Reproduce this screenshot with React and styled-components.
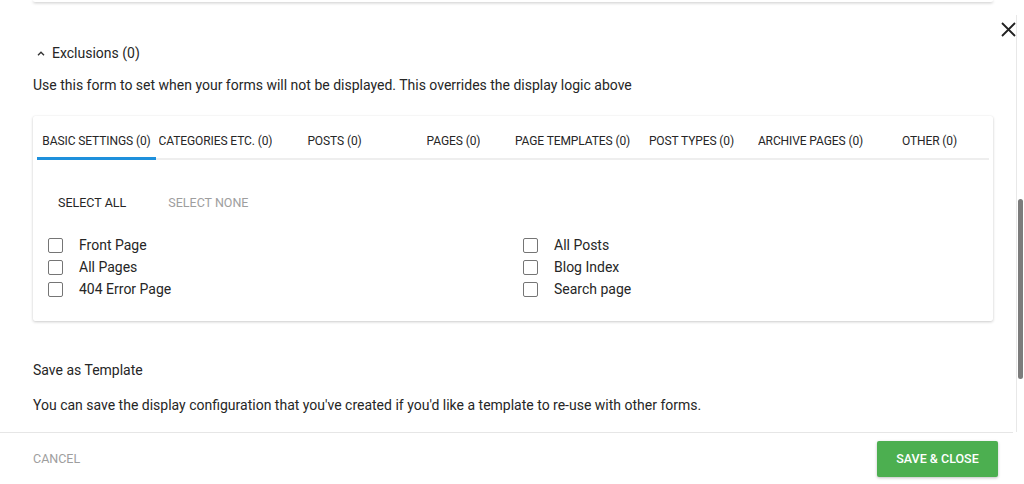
import React from 'react'
import styled, { createGlobalStyle } from 'styled-components'

const GlobalStyle = createGlobalStyle`
  html, body {
    margin: 0;
    padding: 0;
    background: #fff;
    font-family: Roboto, 'Liberation Sans', sans-serif;
    color: #262626;
  }
`

const tabs = [
  'Basic Settings (0)',
  'Categories etc. (0)',
  'Posts (0)',
  'Pages (0)',
  'Page Templates (0)',
  'Post Types (0)',
  'Archive Pages (0)',
  'Other (0)',
]

const leftItems = ['Front Page', 'All Pages', '404 Error Page']
const rightItems = ['All Posts', 'Blog Index', 'Search page']

const App = () => {
  return (
    <Page>
      <GlobalStyle />
      <Body>
        <Content>
          <PrevCard />
          <SectionToggle>
            <svg width="8" height="5" viewBox="0 0 8 5">
              <path d="M1 4.2 L4 1.2 L7 4.2" fill="none" stroke="#333" strokeWidth="1.4" />
            </svg>
            Exclusions (0)
          </SectionToggle>
          <Text top={12}>Use this form to set when your forms will not be displayed. This overrides the display logic above</Text>

          <Card>
            <TabBar>
              {tabs.map((t, i) => (
                <Tab key={t} active={i === 0}>
                  <TabLabel>{t}</TabLabel>
                </Tab>
              ))}
            </TabBar>
            <Actions>
              <FlatButton>Select All</FlatButton>
              <FlatButton muted>Select None</FlatButton>
            </Actions>
            <Columns>
              <List>
                {leftItems.map((item) => (
                  <Option key={item}>
                    <Box />
                    {item}
                  </Option>
                ))}
              </List>
              <List>
                {rightItems.map((item) => (
                  <Option key={item}>
                    <Box />
                    {item}
                  </Option>
                ))}
              </List>
            </Columns>
          </Card>

          <Title>Save as Template</Title>
          <Text top={15}>You can save the display configuration that you've created if you'd like a template to re-use with other forms.</Text>
        </Content>
        <Track>
          <Thumb />
        </Track>
      </Body>
      <Footer>
        <CancelButton>Cancel</CancelButton>
        <SaveButton>Save &amp; Close</SaveButton>
      </Footer>
      <Close aria-label="close">
        <svg width="15" height="15" viewBox="0 0 15 15">
          <path d="M1 1 L14 14 M14 1 L1 14" stroke="#222" strokeWidth="1.8" />
        </svg>
      </Close>
    </Page>
  )
}

const Page = styled.div`
  position: relative;
  width: 1024px;
  height: 484px;
  display: flex;
  flex-direction: column;
  overflow: hidden;
`
const Body = styled.div`
  display: flex;
  height: 432px;
`
const Content = styled.div`
  flex: 1;
  padding: 0 23px 0 33px;
  display: flex;
  flex-direction: column;
`
const PrevCard = styled.div`
  height: 2px;
  background: #fff;
  border-radius: 0 0 2px 2px;
  box-shadow: 0 1px 3px rgba(0, 0, 0, 0.25);
`
const SectionToggle = styled.div`
  margin-top: 41px;
  display: flex;
  align-items: center;
  gap: 7px;
  padding-left: 4px;
  font-size: 14px;
  line-height: 20px;
`
const Text = styled.p`
  margin: ${(p) => p.top}px 0 0;
  font-size: 14px;
  line-height: 20px;
`
const Card = styled.div`
  margin-top: 21px;
  background: #fff;
  border-radius: 2px;
  box-shadow: 0 1px 3px rgba(0, 0, 0, 0.2), 0 0 1px rgba(0, 0, 0, 0.08);
  padding-bottom: 21px;
`
const TabBar = styled.div`
  display: flex;
  margin: 0 4px;
  border-bottom: 2px solid #eeeeee;
`
const Tab = styled.div`
  width: 119px;
  height: 44px;
  display: flex;
  align-items: center;
  justify-content: center;
  box-sizing: border-box;
  padding: 9px 0 0;
  border-bottom: 3px solid ${(p) => (p.active ? '#1e90dc' : 'transparent')};
  margin-bottom: -2px;
`
const TabLabel = styled.span`
  font-size: 12px;
  letter-spacing: -0.1px;
  text-transform: uppercase;
  white-space: nowrap;
  overflow: hidden;
  text-overflow: ellipsis;
  color: #262626;
`
const Actions = styled.div`
  display: flex;
  gap: 10px;
  margin: 24px 0 0 9px;
`
const FlatButton = styled.button`
  height: 36px;
  padding: 0 16px;
  border: none;
  background: transparent;
  font-family: inherit;
  font-size: 12.5px;
  text-transform: uppercase;
  color: ${(p) => (p.muted ? '#9e9e9e' : '#262626')};
`
const Columns = styled.div`
  display: grid;
  grid-template-columns: 475px 1fr;
  margin: 14px 0 0 15px;
`
const List = styled.div`
  display: flex;
  flex-direction: column;
`
const Option = styled.label`
  display: flex;
  align-items: center;
  gap: 16px;
  height: 22px;
  font-size: 14px;
`
const Box = styled.span`
  width: 15px;
  height: 15px;
  box-sizing: border-box;
  border: 1.5px solid #757575;
  border-radius: 2px;
`
const Title = styled.h3`
  margin: 39px 0 0;
  font-size: 14px;
  font-weight: 400;
  line-height: 20px;
`
const Track = styled.div`
  width: 10px;
  border-left: 1px solid #e8e8e8;
  padding: 184px 1px 0 1px;
  margin-top: 15px;
  box-sizing: border-box;
`
const Thumb = styled.div`
  height: 180px;
  border-radius: 4px;
  background: #7c7c7c;
`
const Footer = styled.div`
  flex: 1;
  margin-right: 11px;
  border-top: 1px solid #e6e6e6;
  display: flex;
  align-items: center;
  justify-content: space-between;
  padding: 0 15px 0 33px;
`
const CancelButton = styled.button`
  border: none;
  background: transparent;
  padding: 0;
  font-family: inherit;
  font-size: 12.5px;
  text-transform: uppercase;
  color: #9e9e9e;
`
const SaveButton = styled.button`
  width: 121px;
  height: 36px;
  border: none;
  border-radius: 2px;
  background: #4caf50;
  color: #fff;
  font-family: inherit;
  font-size: 12.5px;
  font-weight: 500;
  text-transform: uppercase;
  box-shadow: 0 1px 3px rgba(0, 0, 0, 0.25);
`
const Close = styled.button`
  position: absolute;
  top: 22px;
  right: 8px;
  padding: 0;
  border: none;
  background: transparent;
  line-height: 0;
`

export default App
